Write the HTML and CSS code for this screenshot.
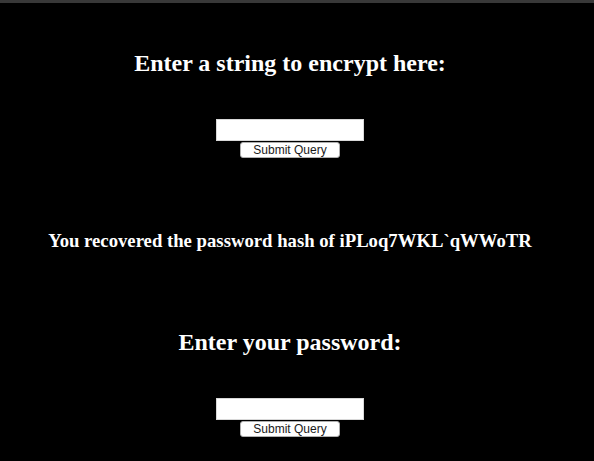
FILE: index.html
```html
<!DOCTYPE html>
<html>
<head>
<meta charset="utf-8">
<link rel="stylesheet" href="styles.css">
</head>
<body>
<div class="topbar"></div>
<main class="page">
  <form class="block">
    <h2 class="title">Enter a string to encrypt here:</h2>
    <input class="field" type="text">
    <button class="btn" type="button">Submit Query</button>
  </form>
  <h3 class="result">You recovered the password hash of iPLoq7WKL`qWWoTR</h3>
  <form class="block">
    <h2 class="title">Enter your password:</h2>
    <input class="field" type="text">
    <button class="btn" type="button">Submit Query</button>
  </form>
</main>
</body>
</html>
```
FILE: styles.css
```css
html, body {
  margin: 0;
  padding: 0;
  background: #000;
  height: 100%;
}
body {
  font-family: "Liberation Serif", "Times New Roman", serif;
  color: #fff;
}
.topbar {
  height: 3px;
  background: #383838;
}
.page {
  display: flex;
  flex-direction: column;
  align-items: center;
  padding-right: 14px;
}
.block {
  display: flex;
  flex-direction: column;
  align-items: center;
  margin: 0;
}
.title {
  font-size: 24px;
  font-weight: bold;
  margin: 0;
  line-height: 28px;
}
.block:first-child .title {
  margin-top: 46px;
}
.field {
  width: 148px;
  height: 22px;
  box-sizing: border-box;
  border: 1px solid #d8d8d8;
  background: #fff;
  margin: 42px 0 1px 0;
  padding: 0;
}
.btn {
  width: 100px;
  height: 16px;
  box-sizing: border-box;
  padding: 0;
  border: 1px solid #b0b0b0;
  border-radius: 3px;
  background: #fff;
  font-family: "Liberation Sans", Arial, sans-serif;
  font-size: 12px;
  line-height: 14px;
  color: #1a1a1a;
}
.result {
  font-size: 18.72px;
  font-weight: bold;
  margin: 72px 0 76px 0;
  line-height: 22px;
}
```
